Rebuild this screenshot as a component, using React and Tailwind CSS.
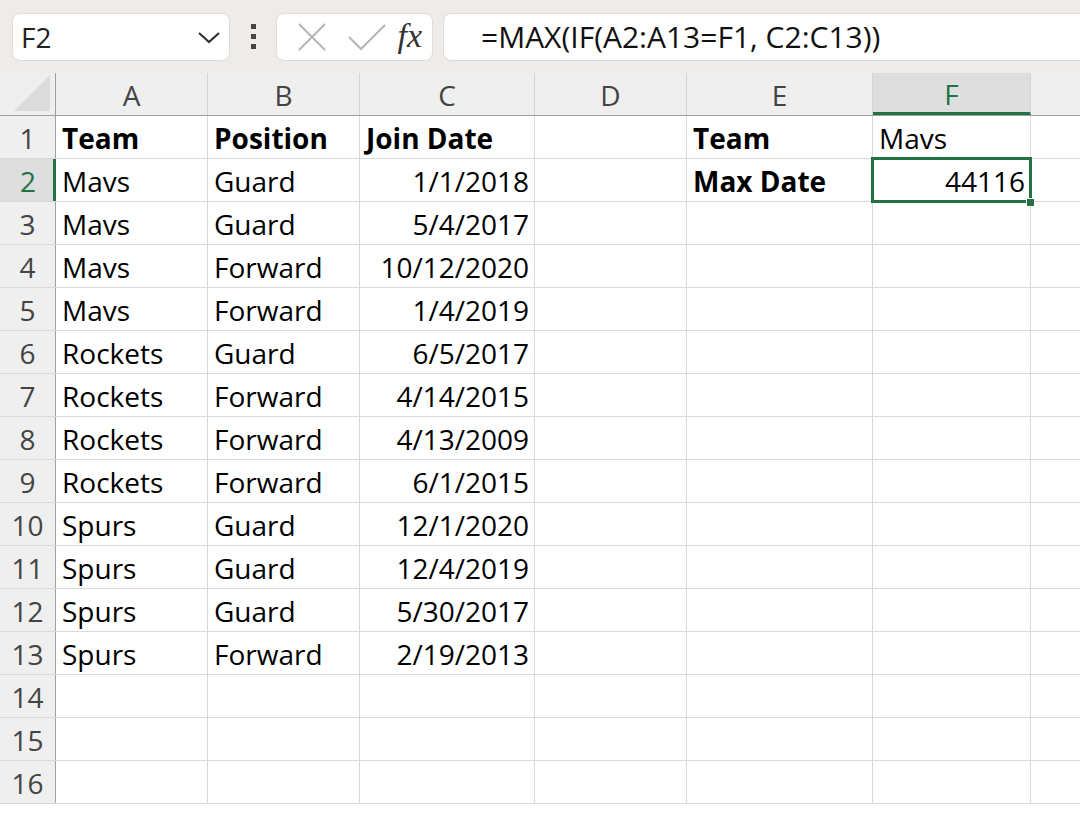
import React from "react";

const cols = [
  { k: "A", w: "w-[152px]" },
  { k: "B", w: "w-[152px]" },
  { k: "C", w: "w-[175px]" },
  { k: "D", w: "w-[152px]" },
  { k: "E", w: "w-[186px]" },
  { k: "F", w: "w-[158px]" },
];

const data = [
  ["Team", "Position", "Join Date", "", "Team", "Mavs"],
  ["Mavs", "Guard", "1/1/2018", "", "Max Date", "44116"],
  ["Mavs", "Guard", "5/4/2017", "", "", ""],
  ["Mavs", "Forward", "10/12/2020", "", "", ""],
  ["Mavs", "Forward", "1/4/2019", "", "", ""],
  ["Rockets", "Guard", "6/5/2017", "", "", ""],
  ["Rockets", "Forward", "4/14/2015", "", "", ""],
  ["Rockets", "Forward", "4/13/2009", "", "", ""],
  ["Rockets", "Forward", "6/1/2015", "", "", ""],
  ["Spurs", "Guard", "12/1/2020", "", "", ""],
  ["Spurs", "Guard", "12/4/2019", "", "", ""],
  ["Spurs", "Guard", "5/30/2017", "", "", ""],
  ["Spurs", "Forward", "2/19/2013", "", "", ""],
  ["", "", "", "", "", ""],
  ["", "", "", "", "", ""],
  ["", "", "", "", "", ""],
];

function Cell({ w, children, right, bold, selected }) {
  return (
    <div
      className={`${w} h-full shrink-0 border-r border-[#d9d9d9] flex items-center pt-[2px] ${
        right ? "justify-end pr-[5px]" : "pl-[6px]"
      } ${bold ? "font-bold" : ""} relative ${selected ? "z-10" : ""}`}
    >
      <span className="whitespace-nowrap">{children}</span>
      {selected && (
        <>
          <div className="absolute left-[-2px] top-[-2px] right-[-2px] bottom-[-2px] border-[3px] border-[#217346] pointer-events-none" />
          <div className="absolute right-[-5px] bottom-[-6px] w-[9px] h-[9px] bg-[#217346] border border-white" />
        </>
      )}
    </div>
  );
}

export default function App() {
  return (
    <div
      className="w-[1080px] h-[816px] overflow-hidden bg-white text-black"
      style={{ fontFamily: '"Open Sans", "Noto Sans", sans-serif' }}
    >
      {/* Toolbar */}
      <div className="h-[73px] bg-[#efebe9] flex items-center pl-[12px] gap-0">
        <div className="w-[218px] h-[48px] bg-white rounded-lg border border-[#dcdcdc] flex items-center justify-between pl-[8px] pr-[8px]">
          <span className="text-[28px] text-[#222]">F2</span>
          <svg width="24" height="16" viewBox="0 0 24 16">
            <path d="M2 4 L12 13 L22 4" fill="none" stroke="#333" strokeWidth="2.2" />
          </svg>
        </div>
        <div className="w-[46px] flex flex-col items-center justify-center gap-[5px]">
          <div className="w-[5px] h-[5px] bg-[#444]" />
          <div className="w-[5px] h-[5px] bg-[#444]" />
          <div className="w-[5px] h-[5px] bg-[#444]" />
        </div>
        <div className="w-[157px] h-[48px] bg-white rounded-lg border border-[#dcdcdc] flex items-center pl-[20px] pr-[10px]">
          <svg width="30" height="30" viewBox="0 0 30 30">
            <path d="M2 2 L28 28 M28 2 L2 28" stroke="#b5b5b5" strokeWidth="2" fill="none" />
          </svg>
          <svg width="40" height="28" viewBox="0 0 40 28" className="ml-[20px]">
            <path d="M2 14 L14 26 L38 2" stroke="#b5b5b5" strokeWidth="2" fill="none" />
          </svg>
          <span
            className="ml-auto text-[34px] italic text-[#333] leading-none pb-[2px]"
            style={{ fontFamily: '"Liberation Serif", "DejaVu Serif", serif' }}
          >
            fx
          </span>
        </div>
        <div className="ml-[10px] flex-1 h-[48px] bg-white rounded-l-lg border border-r-0 border-[#dcdcdc] flex items-center pl-[37px]">
          <span className="text-[30px] text-[#111]">=MAX(IF(A2:A13=F1, C2:C13))</span>
        </div>
      </div>

      {/* Column headers */}
      <div className="h-[43px] flex bg-[#efefef] border-b border-[#a0a0a0] text-[28px] text-[#444]">
        <div className="w-[56px] h-full shrink-0 border-r border-[#a0a0a0] relative">
          <svg className="absolute right-[5px] bottom-[4px]" width="36" height="36" viewBox="0 0 36 36">
            <path d="M36 0 L36 36 L0 36 Z" fill="#dcdcdc" />
          </svg>
        </div>
        {cols.map((c) => (
          <div
            key={c.k}
            className={`${c.w} h-full shrink-0 border-r border-[#d4d4d4] flex items-center justify-center ${
              c.k === "F" ? "bg-[#dedede] text-[#217346] border-b-[3px] border-b-[#217346] pt-[3px]" : "pt-[2px]"
            }`}
          >
            {c.k}
          </div>
        ))}
        <div className="flex-1" />
      </div>

      {/* Rows */}
      {data.map((row, i) => {
        const n = i + 1;
        const isSel = n === 2;
        return (
          <div key={n} className="h-[43px] flex border-b border-[#d9d9d9] text-[28px]">
            <div
              className={`w-[56px] h-full shrink-0 flex items-center justify-center pt-[2px] ${
                isSel
                  ? "bg-[#dedede] text-[#217346] border-r-[3px] border-[#217346] pl-[3px]"
                  : "bg-[#efefef] text-[#444] border-r border-[#a0a0a0]"
              }`}
            >
              {n}
            </div>
            {cols.map((c, j) => (
              <Cell
                key={c.k}
                w={c.w}
                right={(j === 2 && n > 1) || (j === 5 && n === 2)}
                bold={(n === 1 && j < 3) || (j === 4 && (n === 1 || n === 2))}
                selected={j === 5 && n === 2}
              >
                {row[j]}
              </Cell>
            ))}
            <div className="flex-1" />
          </div>
        );
      })}
    </div>
  );
}
